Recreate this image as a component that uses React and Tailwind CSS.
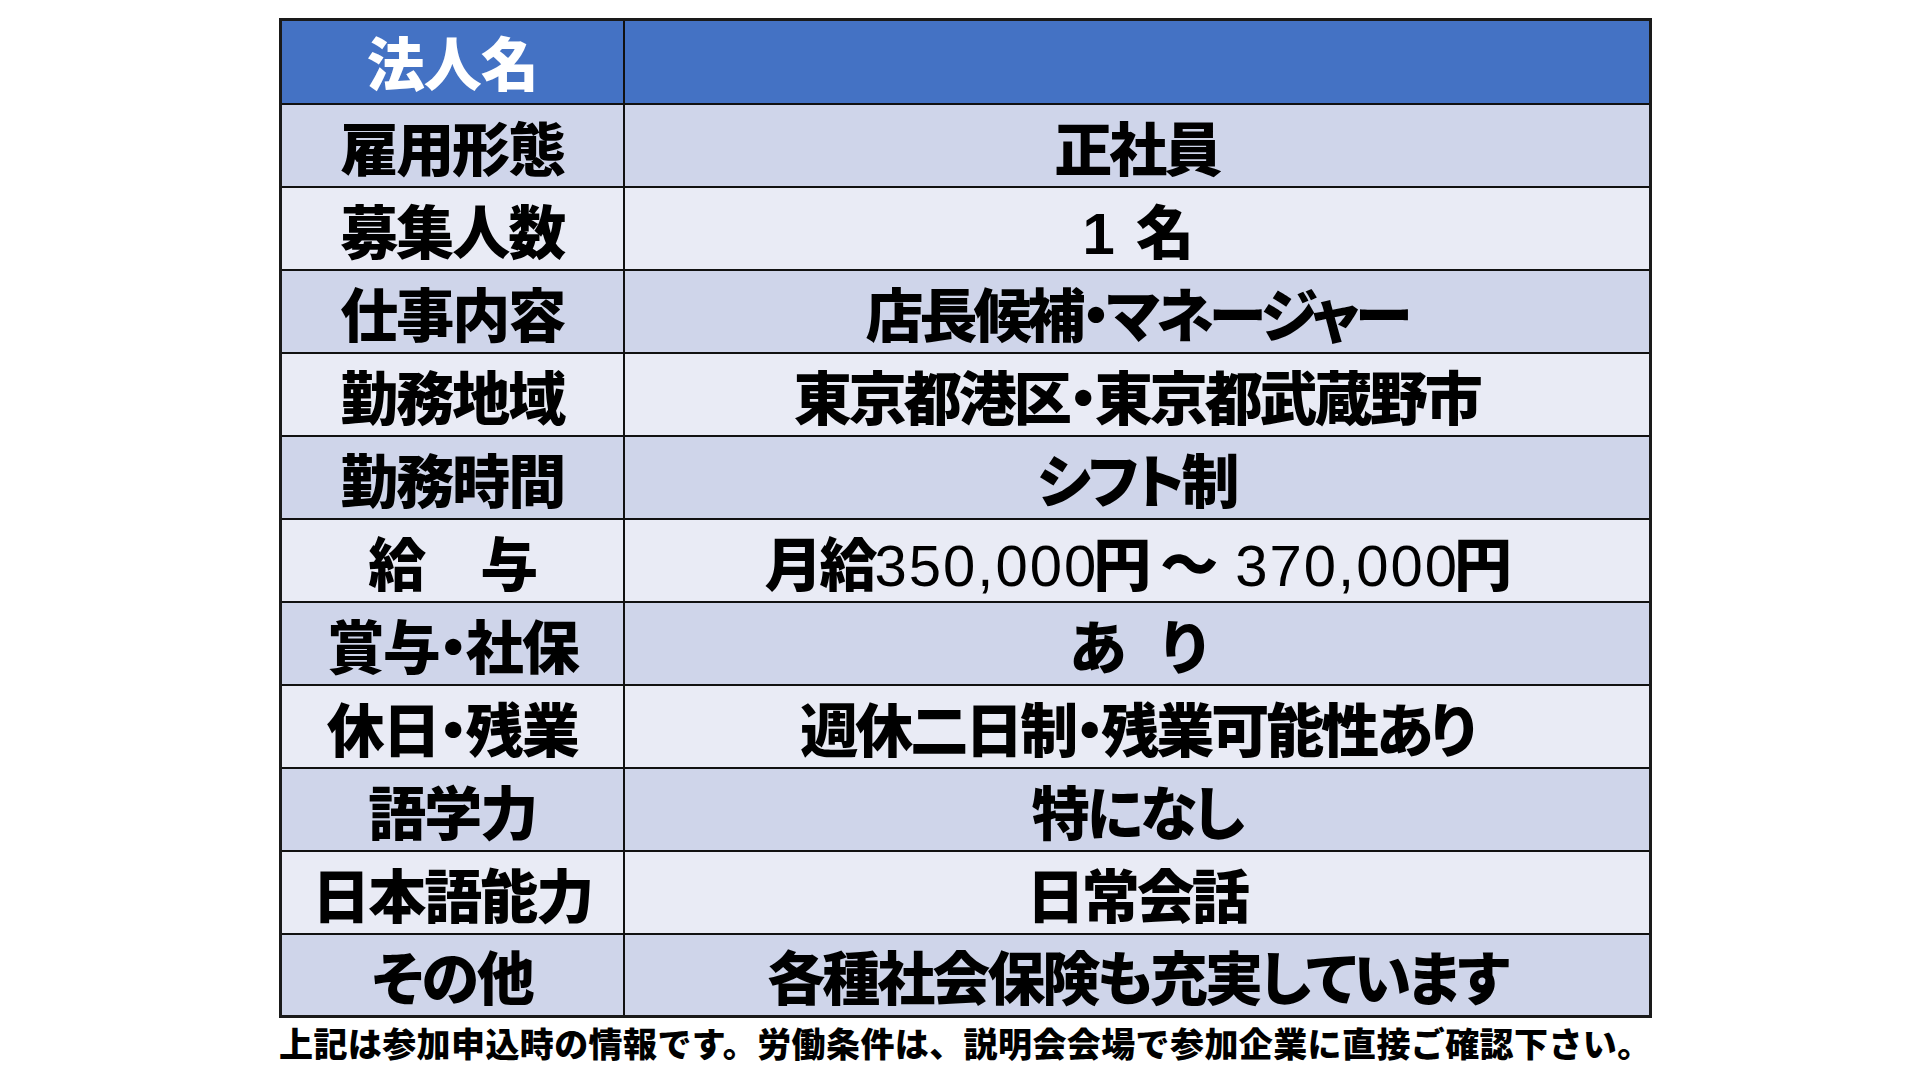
import React from "react";

const rows = [
  { label: "雇用形態", value: "正社員" },
  { label: "募集人数", value: <><span className="font-['Liberation_Sans',sans-serif] font-bold">1</span><span className="inline-block w-[24px]"></span>名</> },
  { label: "仕事内容", value: <span className="tracking-[-4px]">店長候補・マネージャー</span> },
  { label: "勤務地域", value: "東京都港区・東京都武蔵野市" },
  { label: "勤務時間", value: "シフト制" },
  {
    label: <>給<span className="inline-block w-[56px]"></span>与</>,
    value: (
      <>
        月給<span className="font-normal tracking-[2px]">350,00</span><span className="font-normal">0</span>円<span className="inline-block w-[12px]"></span>～<span className="inline-block w-[20px]"></span><span className="font-normal tracking-[2px]">370,00</span><span className="font-normal">0</span>円
      </>
    ),
  },
  { label: "賞与・社保", value: <>あ<span className="inline-block w-[38px]"></span>り</> },
  { label: "休日・残業", value: "週休二日制・残業可能性あり" },
  { label: "語学力", value: "特になし" },
  { label: "日本語能力", value: "日常会話" },
  { label: "その他", value: "各種社会保険も充実しています" },
];

export default function App() {
  return (
    <div className="w-[1920px] h-[1080px] bg-white pl-[279px] pt-[18px] font-['Liberation_Sans','Noto_Sans_CJK_JP',sans-serif] [font-feature-settings:'palt']">
      <table className="w-[1373px] border-collapse border-[3px] border-[#1a1a1a]">
        <tbody>
          <tr className="h-[84px] bg-[#4472C4]">
            <td className="w-[343px] border-2 border-[#111] text-center text-[58px] leading-none font-black text-white pt-[8px] tracking-[-1px]">
              法人名
            </td>
            <td className="border-2 border-[#111]"></td>
          </tr>
          {rows.map((r, i) => (
            <tr key={i} className={`h-[83px] ${i % 2 === 0 ? "bg-[#CFD5EA]" : "bg-[#E9EBF5]"}`}>
              <td className="border-2 border-[#111] text-center text-[58px] leading-none font-black text-black pt-[11px] tracking-[-2px]">
                {r.label}
              </td>
              <td className="border-2 border-[#111] text-center text-[58px] leading-none font-black text-black pt-[11px] tracking-[-3px]">
                {r.value}
              </td>
            </tr>
          ))}
        </tbody>
      </table>
      <div className="mt-[10px] text-[34px] leading-none font-black text-black [font-feature-settings:normal] tracking-[0.4px]">
        上記は参加申込時の情報です。労働条件は、説明会会場で参加企業に直接ご確認下さい。
      </div>
    </div>
  );
}
